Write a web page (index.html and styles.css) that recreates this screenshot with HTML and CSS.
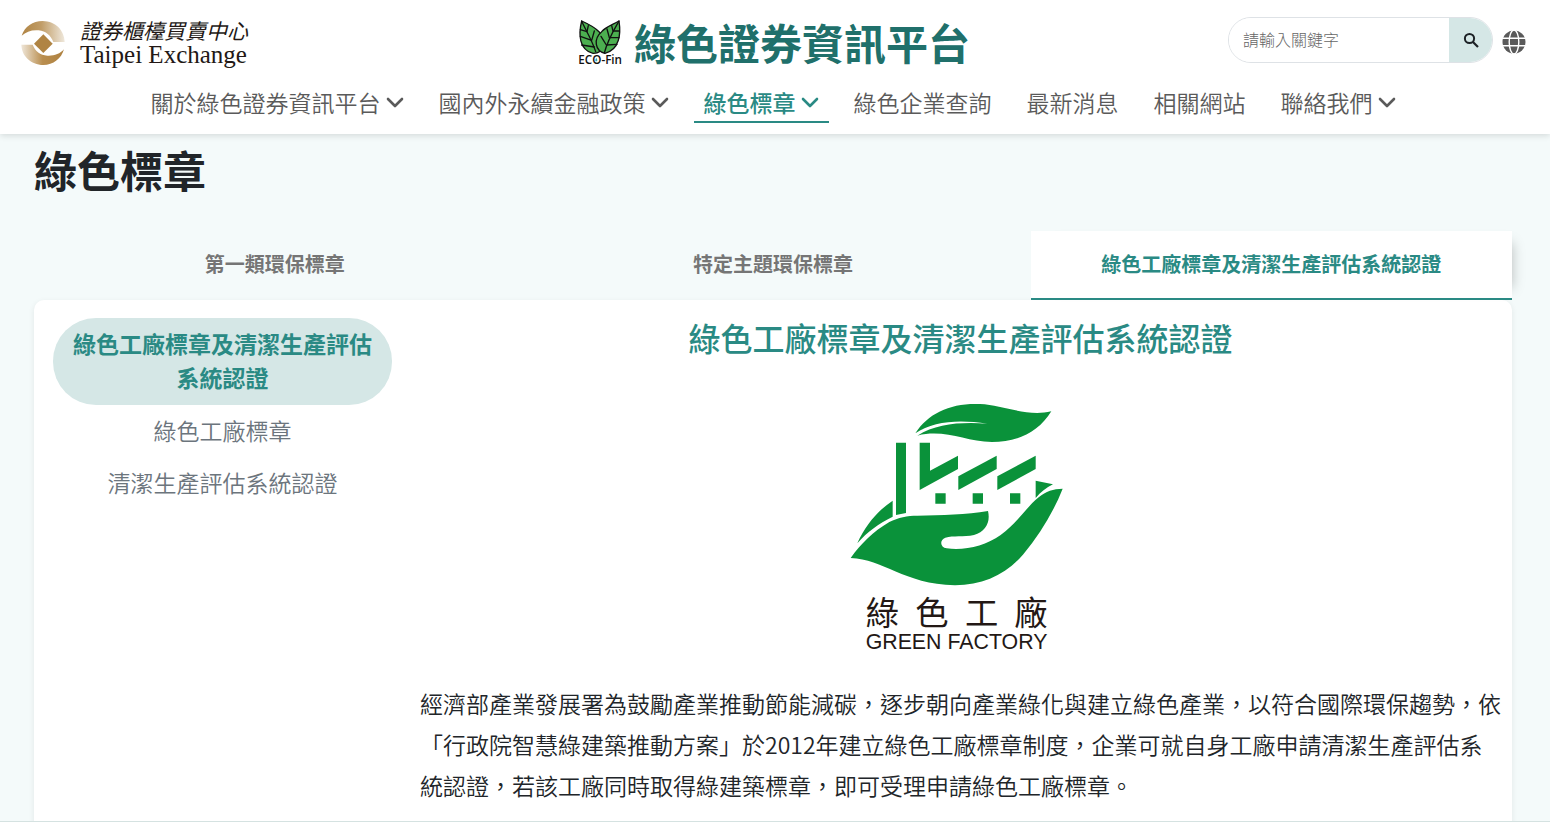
FILE: index.html
```html
<!DOCTYPE html>
<html lang="zh-Hant">
<head>
    <meta charset="UTF-8">
    <meta name="viewport" content="width=device-width, initial-scale=1.0">
    <title>綠色標章</title>
    <link rel="stylesheet" href="styles.css">
</head>
<body>

    <!-- Shared chevron -->
    <svg class="sprite" width="0" height="0" aria-hidden="true">
        <symbol id="chevron" viewBox="0 0 18 18">
            <path d="M2 6 L9 13 L16 6" fill="none" stroke="currentColor" stroke-width="2.6" stroke-linecap="round" stroke-linejoin="round"/>
        </symbol>
    </svg>

    <header class="header">
        <div class="header-top">
            <a class="tpex" href="#">
                <svg width="46" height="46" viewBox="0 0 138 138" aria-hidden="true">
                    <defs>
                        <linearGradient id="goldTop" x1="0" y1="0" x2="1" y2="0">
                            <stop offset="0" stop-color="#b08443"/>
                            <stop offset="0.45" stop-color="#c09c66"/>
                            <stop offset="1" stop-color="#efe8dc"/>
                        </linearGradient>
                        <linearGradient id="goldBottom" x1="0" y1="0" x2="1" y2="0">
                            <stop offset="0" stop-color="#efe6d8"/>
                            <stop offset="0.5" stop-color="#b98e4f"/>
                            <stop offset="1" stop-color="#ae8140"/>
                        </linearGradient>
                    </defs>
                    <path d="M5 47 C14 20 38 3 68 3 C108 4 133 32 134 66 L100 66 C92 46 78 34 56 31 C36 29 18 35 5 47 Z" fill="url(#goldTop)"/>
                    <path d="M132 88 C124 116 100 135 70 135 C32 134 5 108 4 74 L38 74 C46 94 60 105 82 107 C102 108 120 102 132 88 Z" fill="url(#goldBottom)"/>
                    <path d="M70 43 L98 71 L70 99 L42 71 Z" fill="#b08443"/>
                </svg>
                <span class="tpex-text">
                    <span class="tpex-zh">證券櫃檯買賣中心</span>
                    <span class="tpex-en">Taipei Exchange</span>
                </span>
            </a>

            <a class="site-name" href="#">
                <svg width="46" height="46" viewBox="0 0 138 138" aria-hidden="true">
                    <g fill="#4caf50" stroke="#111" stroke-width="4" stroke-linejoin="round" stroke-linecap="round">
                        <path d="M17 6 C7 46 9 92 51 103 C83 104 95 68 69 38 C53 22 35 14 17 6 Z"/>
                        <path d="M129 6 C135 44 131 92 87 103 C57 96 51 60 77 38 C91 22 109 18 129 6 Z"/>
                        <path d="M17 6 C29 34 47 60 59 98 M129 6 C113 34 95 62 85 102" fill="none"/>
                        <path d="M33 38 L37 20 M33 38 L13 32 M47 64 L55 36 M47 64 L13 52 M55 84 L17 78" fill="none"/>
                        <path d="M111 36 L107 20 M111 36 L130 36 M100 56 L93 30 M100 56 L129 56 M91 78 L75 52 M91 78 L123 76" fill="none"/>
                    </g>
                    <text class="eco-text" x="7" y="134">ECO-Fin</text>
                    <path d="M61 116 C65 122 65 127 61 127 C57 127 57 122 61 116 Z" fill="#29a9b8"/>
                </svg>
                <span>綠色證券資訊平台</span>
            </a>

            <div class="tools">
                <form class="search">
                    <input type="text" name="keyword" placeholder="請輸入關鍵字" aria-label="請輸入關鍵字">
                    <button type="submit" aria-label="搜尋">
                        <svg width="16" height="16" viewBox="0 0 16 16" aria-hidden="true">
                            <circle cx="6.5" cy="6.5" r="4.6" fill="none" stroke="#1d2226" stroke-width="2"/>
                            <path d="M10 10 L15 15" stroke="#1d2226" stroke-width="2.2"/>
                        </svg>
                    </button>
                </form>
                <button type="button" class="lang" aria-label="語言">
                    <svg width="24" height="24" viewBox="0 0 24 24" aria-hidden="true">
                        <circle cx="12" cy="12" r="11.5" fill="#5a5a5a"/>
                        <g fill="none" stroke="#fff" stroke-width="1.4">
                            <ellipse cx="12" cy="12" rx="4.8" ry="12"/>
                            <path d="M0 8.2 H24 M0 15.8 H24"/>
                        </g>
                    </svg>
                </button>
            </div>
        </div>

        <nav class="nav">
            <a href="#">關於綠色證券資訊平台<svg><use href="#chevron"/></svg></a>
            <a href="#">國內外永續金融政策<svg><use href="#chevron"/></svg></a>
            <a href="#" class="active">綠色標章<svg><use href="#chevron"/></svg></a>
            <a href="#">綠色企業查詢</a>
            <a href="#">最新消息</a>
            <a href="#">相關網站</a>
            <a href="#">聯絡我們<svg><use href="#chevron"/></svg></a>
        </nav>
    </header>

    <main class="main">
        <h1>綠色標章</h1>

        <div class="tabs">
            <a href="#">第一類環保標章</a>
            <a href="#">特定主題環保標章</a>
            <a href="#" class="active">綠色工廠標章及清潔生產評估系統認證</a>
        </div>

        <div class="card">
            <div class="side">
                <a href="#" class="active">綠色工廠標章及清潔生產評估系統認證</a>
                <a href="#">綠色工廠標章</a>
                <a href="#">清潔生產評估系統認證</a>
            </div>

            <article class="content">
                <h2>綠色工廠標章及清潔生產評估系統認證</h2>
                <svg class="factory" width="250" height="280" viewBox="18 0 750 840" role="img" aria-label="綠色工廠">
                    <g fill="#0a923a">
                        <!-- leaf -->
                        <path d="M256 130 C295 68 365 38 450 42 C520 45 590 82 664 64 C625 128 560 156 486 156 C405 155 345 116 262 137 C320 101 390 96 472 101 C390 88 310 92 256 130 Z"/>
                        <!-- chimney and roofs -->
                        <path d="M198 158 H228 V369 L198 375 Z"/>
                        <path d="M269 158 H300 V242 L384 197 V237 L269 300 Z"/>
                        <path d="M385 259 L500 197 V237 L385 300 Z"/>
                        <path d="M502 259 L617 197 V237 L502 300 Z"/>
                        <path d="M316 310 H347 V341 H316 Z M428 310 H459 V341 H428 Z M540 310 H571 V341 H540 Z"/>
                        <!-- hand -->
                        <path d="M82 460 C105 408 142 362 188 332 V380 C145 402 112 425 82 460 Z"/>
                        <path d="M617 272 L669 283 C648 293 632 307 617 324 Z"/>
                        <path d="M62 504 C92 462 130 424 178 396 C205 382 232 377 262 377 C335 375 410 375 474 363 C482 397 467 425 432 435 C400 442 370 436 346 443 C328 450 330 472 350 475 C405 482 465 468 512 435 C560 402 590 350 626 322 C648 303 670 297 698 296 C672 362 632 430 580 493 C530 552 460 586 375 586 C220 582 160 507 62 504 Z"/>
                    </g>
                    <text class="factory-zh" x="107 256 405 553" y="706">綠色工廠</text>
                    <text class="factory-en" x="107" y="778">GREEN FACTORY</text>
                </svg>
                <p>經濟部產業發展署為鼓勵產業推動節能減碳，逐步朝向產業綠化與建立綠色產業，以符合國際環保趨勢，依「行政院智慧綠建築推動方案」於2012年建立綠色工廠標章制度，企業可就自身工廠申請清潔生產評估系統認證，若該工廠同時取得綠建築標章，即可受理申請綠色工廠標章。</p>
            </article>
        </div>
    </main>

    <div class="bottom-bar"></div>

</body>
</html>
```
FILE: styles.css
```css
* {
    box-sizing: border-box;
}

body {
    margin: 0;
    background-color: #f4fafa;
    color: #212529;
    font-family: "Noto Sans CJK TC", sans-serif;
    font-size: 23px;
    font-weight: 350;
    overflow-x: hidden;
}

a {
    color: inherit;
    text-decoration: none;
}

.sprite {
    position: absolute;
}

/* Header */
.header {
    position: relative;
    height: 134px;
    background: white;
    box-shadow: 0 2px 6px rgba(0, 0, 0, 0.12);
}

.header-top {
    display: grid;
    grid-template-columns: 1fr auto 1fr;
    align-items: center;
    height: 84px;
    padding: 0 24px 0 20px;
}

.tpex {
    display: flex;
    align-items: center;
    gap: 14px;
    padding-top: 2px;
}

.tpex-text {
    display: flex;
    flex-direction: column;
    color: #231815;
    font-weight: 400;
}

.tpex-zh {
    font-size: 21px;
    font-style: italic;
    line-height: 24px;
}

.tpex-en {
    font-family: "Liberation Serif", serif;
    font-size: 25px;
    line-height: 26px;
}

.site-name {
    display: flex;
    align-items: center;
    gap: 12px;
    color: #20706b;
    font-size: 42px;
    font-weight: 700;
    line-height: 84px;
}

.eco-text {
    font-family: "Open Sans", sans-serif;
    font-size: 35px;
    font-weight: 600;
    fill: #111;
}

.tools {
    display: flex;
    align-items: center;
    justify-content: flex-end;
    gap: 9px;
}

.search {
    display: flex;
    width: 265px;
    height: 46px;
    margin-bottom: 4px;
    border: 1px solid #dee2e6;
    border-radius: 23px;
    overflow: hidden;
}

.search input {
    flex: 1;
    min-width: 0;
    padding: 0 14px 2px;
    border: none;
    outline: none;
    font-family: inherit;
    font-size: 16px;
    font-weight: 300;
}

.search input::placeholder {
    color: #666;
}

.search button {
    display: flex;
    align-items: center;
    justify-content: center;
    width: 43px;
    padding: 0;
    border: none;
    background: #d5e7e6;
    cursor: pointer;
}

.lang {
    display: flex;
    padding: 0;
    border: none;
    background: none;
    cursor: pointer;
}

.nav {
    display: flex;
    justify-content: center;
    gap: 15px;
    padding-right: 4px;
    color: #5a5a5a;
}

.nav a {
    display: flex;
    align-items: center;
    gap: 5px;
    height: 39px;
    padding: 0 10px 2px;
    border-bottom: 2px solid transparent;
    white-space: nowrap;
}

.nav svg {
    width: 18px;
    height: 18px;
}

.nav .active {
    border-color: #2a8a84;
    color: #2a8a84;
    font-weight: 500;
}

/* Page */
.main {
    padding: 0 38px 0 34px;
}

h1 {
    margin: 0;
    padding: 3px 0 30px;
    font-size: 43px;
    font-weight: 700;
    line-height: 64px;
}

.tabs {
    display: grid;
    grid-template-columns: repeat(3, 1fr);
    gap: 17px;
    color: #757575;
    font-size: 20px;
    font-weight: 700;
    text-align: center;
}

.tabs a {
    height: 69px;
    border-bottom: 2px solid transparent;
    line-height: 66px;
}

.tabs .active {
    border-color: #2a8a84;
    background: white;
    box-shadow: 12px 0 12px -12px rgba(0, 0, 0, 0.25);
    color: #2a8a84;
}

.card {
    display: flex;
    gap: 28px;
    min-height: 560px;
    padding: 18px 11px 18px 19px;
    border-radius: 10px;
    background: white;
    box-shadow: 0 2px 6px rgba(0, 0, 0, 0.08);
}

.side {
    display: flex;
    flex: 0 0 339px;
    flex-direction: column;
    color: #6c757d;
    line-height: 34px;
    text-align: center;
}

.side a {
    padding: 8px 18px 10px;
}

.side .active {
    padding-bottom: 11px;
    border-radius: 43px;
    background: #d5e7e6;
    color: #2a8a84;
    font-weight: 700;
}

.content {
    flex: 1;
    text-align: center;
}

h2 {
    margin: 0;
    color: #2a8a84;
    font-size: 32px;
    font-weight: 500;
    line-height: 38px;
}

.factory {
    display: block;
    margin: 34px auto 13px;
}

.factory-zh {
    font-size: 100px;
    font-weight: 400;
    fill: #231815;
}

.factory-en {
    font-family: "Liberation Sans", sans-serif;
    font-size: 64px;
    fill: #231815;
}

.content p {
    margin: 0;
    line-height: 41px;
    text-align: left;
}

.bottom-bar {
    position: fixed;
    right: 0;
    bottom: 0;
    left: 0;
    border-top: 1px solid #d5e2e1;
}
```
